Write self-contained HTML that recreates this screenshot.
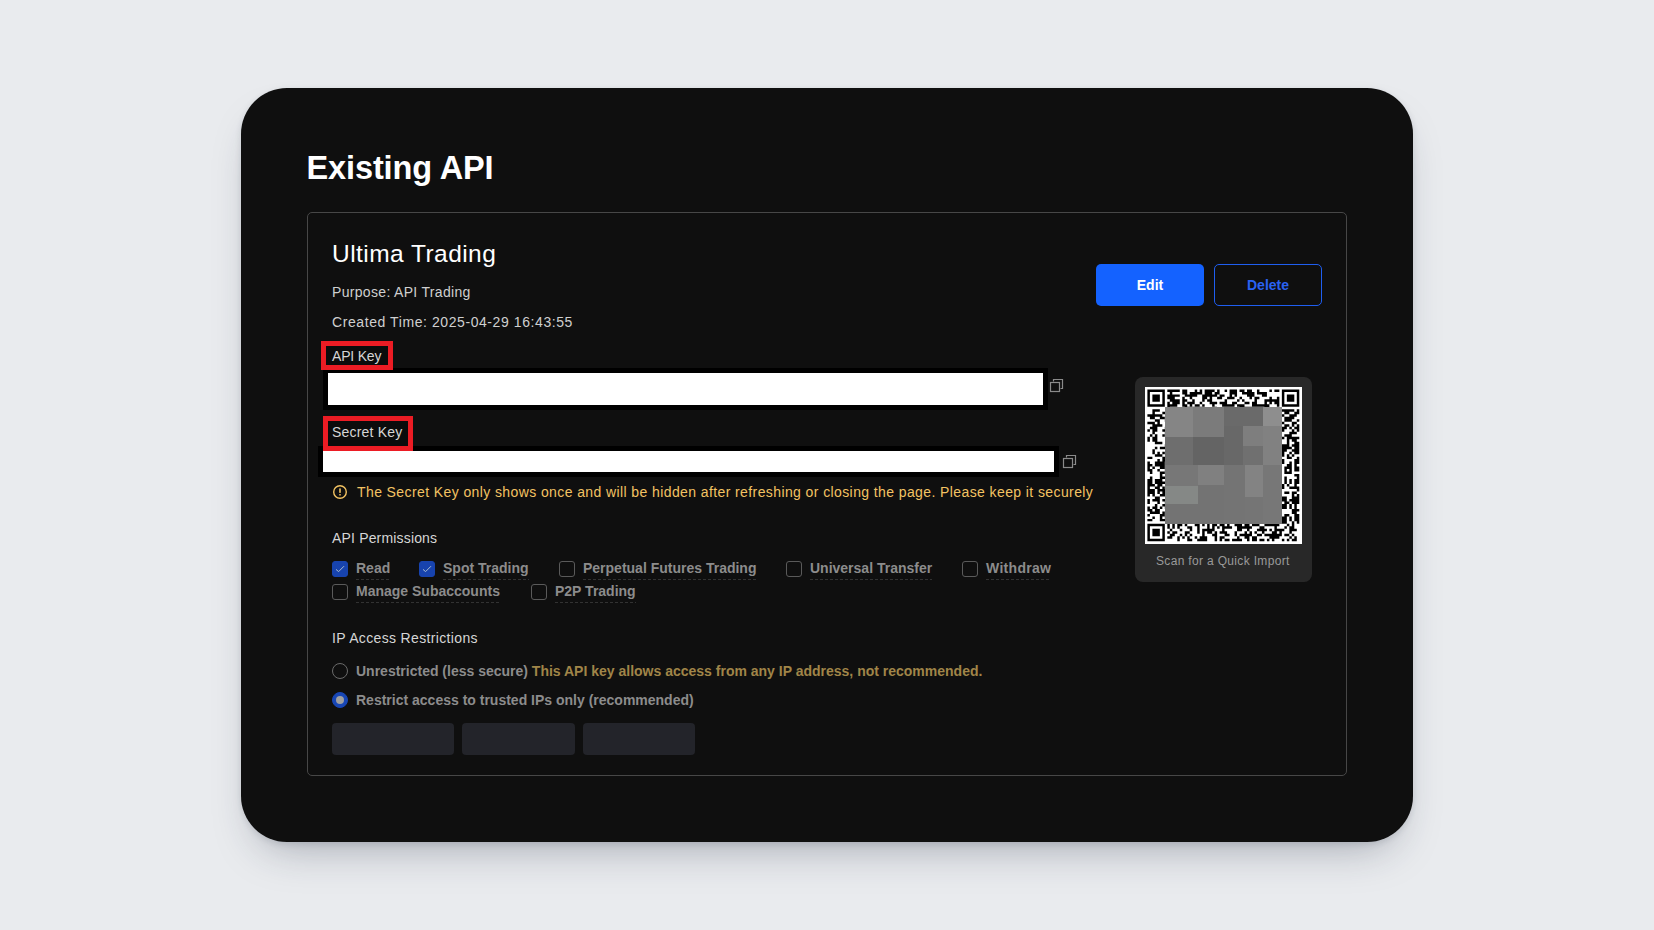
<!DOCTYPE html>
<html><head><meta charset="utf-8">
<style>
*{margin:0;padding:0;box-sizing:border-box}
html,body{width:1654px;height:930px;overflow:hidden;background:#e9ebee;font-family:"Liberation Sans",sans-serif}
.abs{position:absolute;white-space:nowrap}
#card{position:absolute;left:241px;top:88px;width:1172px;height:754px;background:#0f0f0f;border-radius:46px;box-shadow:0 22px 44px -18px rgba(30,40,60,0.36),0 2px 6px rgba(30,40,60,0.12)}
#box{position:absolute;left:307px;top:212px;width:1040px;height:564px;border:1px solid #474747;border-radius:5px}
.title{left:306.5px;top:150px;font-size:32.5px;letter-spacing:-0.12px;font-weight:bold;color:#fff;line-height:36px}
.name{left:332px;top:240px;font-size:24.5px;letter-spacing:0.45px;color:#fff;line-height:28px}
.meta{font-size:14px;color:#cfcfcf;line-height:16px}
.lbl{font-size:14px;color:#d6d6d6;line-height:16px}
.redbox{position:absolute;border:5px solid #ec1c24;background:#0c0c0c}
.keybar{position:absolute;background:#000}
.keywhite{position:absolute;background:#fff}
.btn{position:absolute;top:264px;height:42px;width:108px;border-radius:5px;font-size:14px;font-weight:bold;text-align:center;line-height:42px}
.cb{position:absolute;width:16px;height:16px;border:1px solid #5a5a5a;border-radius:3px}
.cb.on{background:#1743ae;border-color:#1743ae}
.perm{font-size:14px;font-weight:bold;color:#8c8c8c;line-height:16px;padding-bottom:4px;background-image:linear-gradient(90deg,#323232 55%,transparent 55%);background-size:5px 1px;background-repeat:repeat-x;background-position:0 100%}
.nb{background:none!important}
.radio{position:absolute;width:16px;height:16px;border:1px solid #6a6a6a;border-radius:50%}
.inp{position:absolute;top:723px;height:32px;background:#23242a;border-radius:4px}
svg{position:absolute}
</style></head><body>
<div id="card"></div>
<div class="abs title">Existing API</div>
<div id="box"></div>
<div class="abs name">Ultima Trading</div>
<div class="abs meta" style="left:332px;top:284px;letter-spacing:0.32px">Purpose: API Trading</div>
<div class="abs meta" style="left:332px;top:314px;letter-spacing:0.58px">Created Time: 2025-04-29 16:43:55</div>

<div class="btn" style="left:1096px;background:#1462ff;color:#fff">Edit</div>
<div class="btn" style="left:1214px;border:1px solid #1f5ef0;color:#2a62f2;line-height:40px">Delete</div>

<!-- API key -->
<div class="keybar" style="left:323px;top:368px;width:725px;height:42px"></div>
<div class="keywhite" style="left:328px;top:373px;width:715px;height:32px"></div>
<div class="redbox" style="left:321px;top:341px;width:72px;height:29px"></div>
<div class="abs lbl" style="left:332px;top:348px;letter-spacing:-0.2px">API Key</div>
<svg style="left:1049px;top:378px" width="16" height="16" viewBox="0 0 16 16"><path d="M4.5 3.5V1.5H13.5V10.5H11.5" fill="none" stroke="#8a8a8a" stroke-width="1.2"/><rect x="1.5" y="4.5" width="9" height="9" fill="none" stroke="#8a8a8a" stroke-width="1.2"/></svg>

<!-- Secret key -->
<div class="keybar" style="left:318px;top:446px;width:741px;height:31px"></div>
<div class="keywhite" style="left:323px;top:451px;width:731px;height:21px"></div>
<div class="redbox" style="left:323px;top:416px;width:90px;height:35px"></div>
<div class="abs lbl" style="left:332px;top:424px;letter-spacing:0.2px">Secret Key</div>
<svg style="left:1062px;top:454px" width="16" height="16" viewBox="0 0 16 16"><path d="M4.5 3.5V1.5H13.5V10.5H11.5" fill="none" stroke="#8a8a8a" stroke-width="1.2"/><rect x="1.5" y="4.5" width="9" height="9" fill="none" stroke="#8a8a8a" stroke-width="1.2"/></svg>

<svg style="left:332px;top:484px" width="16" height="16" viewBox="0 0 16 16"><circle cx="8" cy="8" r="6.3" fill="none" stroke="#f3c363" stroke-width="1.4"/><rect x="7.2" y="4.3" width="1.6" height="4.6" rx="0.6" fill="#f3c363"/><rect x="7.2" y="10" width="1.6" height="1.6" rx="0.5" fill="#f3c363"/></svg>
<div class="abs" style="left:357px;top:484px;font-size:14px;letter-spacing:0.4px;color:#f3c363;line-height:16px">The Secret Key only shows once and will be hidden after refreshing or closing the page. Please keep it securely</div>

<div class="abs lbl" style="left:332px;top:530px;letter-spacing:0.17px">API Permissions</div>
<div class="cb on" style="left:332px;top:561px"><svg style="left:-1px;top:-1px" width="16" height="16" viewBox="0 0 16 16"><path d="M4 8.4L6.6 10.6L12 5.2" fill="none" stroke="#a9bccf" stroke-width="1"/></svg></div>
<div class="abs perm" style="left:356px;top:560px">Read</div>
<div class="cb on" style="left:419px;top:561px"><svg style="left:-1px;top:-1px" width="16" height="16" viewBox="0 0 16 16"><path d="M4 8.4L6.6 10.6L12 5.2" fill="none" stroke="#a9bccf" stroke-width="1"/></svg></div>
<div class="abs perm" style="left:443px;top:560px">Spot Trading</div>
<div class="cb" style="left:559px;top:561px"></div>
<div class="abs perm" style="left:583px;top:560px">Perpetual Futures Trading</div>
<div class="cb" style="left:786px;top:561px"></div>
<div class="abs perm" style="left:810px;top:560px">Universal Transfer</div>
<div class="cb" style="left:962px;top:561px"></div>
<div class="abs perm" style="left:986px;top:560px;letter-spacing:0.3px">Withdraw</div>
<div class="cb" style="left:332px;top:584px"></div>
<div class="abs perm" style="left:356px;top:583px">Manage Subaccounts</div>
<div class="cb" style="left:531px;top:584px"></div>
<div class="abs perm" style="left:555px;top:583px">P2P Trading</div>

<div class="abs lbl" style="left:332px;top:630px;letter-spacing:0.35px">IP Access Restrictions</div>
<div class="radio" style="left:332px;top:663px"></div>
<div class="abs perm nb" style="left:356px;top:663px">Unrestricted (less secure) <span style="color:#a08548">This API key allows access from any IP address, not recommended.</span></div>
<div class="radio" style="left:332px;top:692px;background:#1846b4;border-color:#1846b4"><div style="position:absolute;left:3px;top:3px;width:8px;height:8px;border-radius:50%;background:#a0a0a0"></div></div>
<div class="abs perm nb" style="left:356px;top:692px">Restrict access to trusted IPs only (recommended)</div>
<div class="inp" style="left:332px;width:122px"></div>
<div class="inp" style="left:462px;width:113px"></div>
<div class="inp" style="left:583px;width:112px"></div>

<div style="position:absolute;left:1135px;top:377px;width:177px;height:205px;background:#282828;border-radius:8px"></div>
<svg style="left:1145px;top:387px" width="157" height="157" viewBox="0 0 157 157"><rect width="157" height="157" fill="#fff"/><path transform="translate(2.4 2.4)" fill="#000" d="M0.00 0.00h17.43v2.49h-17.43zM19.92 0.00h12.45v2.49h-12.45zM34.86 0.00h4.98v2.49h-4.98zM47.31 0.00h2.49v2.49h-2.49zM52.29 0.00h2.49v2.49h-2.49zM57.27 0.00h9.96v2.49h-9.96zM69.72 0.00h2.49v2.49h-2.49zM77.19 0.00h2.49v2.49h-2.49zM82.17 0.00h7.47v2.49h-7.47zM92.13 0.00h4.98v2.49h-4.98zM99.60 0.00h4.98v2.49h-4.98zM109.56 0.00h2.49v2.49h-2.49zM122.01 0.00h2.49v2.49h-2.49zM126.99 0.00h4.98v2.49h-4.98zM134.46 0.00h17.43v2.49h-17.43zM0.00 2.49h2.49v2.49h-2.49zM14.94 2.49h2.49v2.49h-2.49zM22.41 2.49h2.49v2.49h-2.49zM34.86 2.49h4.98v2.49h-4.98zM42.33 2.49h12.45v2.49h-12.45zM57.27 2.49h7.47v2.49h-7.47zM67.23 2.49h4.98v2.49h-4.98zM82.17 2.49h7.47v2.49h-7.47zM94.62 2.49h12.45v2.49h-12.45zM109.56 2.49h9.96v2.49h-9.96zM134.46 2.49h2.49v2.49h-2.49zM149.40 2.49h2.49v2.49h-2.49zM0.00 4.98h2.49v2.49h-2.49zM4.98 4.98h7.47v2.49h-7.47zM14.94 4.98h2.49v2.49h-2.49zM19.92 4.98h12.45v2.49h-12.45zM37.35 4.98h12.45v2.49h-12.45zM54.78 4.98h14.94v2.49h-14.94zM72.21 4.98h4.98v2.49h-4.98zM82.17 4.98h2.49v2.49h-2.49zM87.15 4.98h2.49v2.49h-2.49zM99.60 4.98h7.47v2.49h-7.47zM114.54 4.98h4.98v2.49h-4.98zM134.46 4.98h2.49v2.49h-2.49zM139.44 4.98h7.47v2.49h-7.47zM149.40 4.98h2.49v2.49h-2.49zM0.00 7.47h2.49v2.49h-2.49zM4.98 7.47h7.47v2.49h-7.47zM14.94 7.47h2.49v2.49h-2.49zM19.92 7.47h7.47v2.49h-7.47zM34.86 7.47h2.49v2.49h-2.49zM42.33 7.47h2.49v2.49h-2.49zM54.78 7.47h4.98v2.49h-4.98zM62.25 7.47h2.49v2.49h-2.49zM69.72 7.47h4.98v2.49h-4.98zM79.68 7.47h7.47v2.49h-7.47zM92.13 7.47h2.49v2.49h-2.49zM102.09 7.47h2.49v2.49h-2.49zM107.07 7.47h4.98v2.49h-4.98zM122.01 7.47h2.49v2.49h-2.49zM129.48 7.47h2.49v2.49h-2.49zM134.46 7.47h2.49v2.49h-2.49zM139.44 7.47h7.47v2.49h-7.47zM149.40 7.47h2.49v2.49h-2.49zM0.00 9.96h2.49v2.49h-2.49zM4.98 9.96h7.47v2.49h-7.47zM14.94 9.96h2.49v2.49h-2.49zM22.41 9.96h9.96v2.49h-9.96zM34.86 9.96h4.98v2.49h-4.98zM44.82 9.96h2.49v2.49h-2.49zM54.78 9.96h2.49v2.49h-2.49zM59.76 9.96h4.98v2.49h-4.98zM77.19 9.96h2.49v2.49h-2.49zM89.64 9.96h2.49v2.49h-2.49zM94.62 9.96h2.49v2.49h-2.49zM107.07 9.96h2.49v2.49h-2.49zM117.03 9.96h14.94v2.49h-14.94zM134.46 9.96h2.49v2.49h-2.49zM139.44 9.96h7.47v2.49h-7.47zM149.40 9.96h2.49v2.49h-2.49zM0.00 12.45h2.49v2.49h-2.49zM14.94 12.45h2.49v2.49h-2.49zM19.92 12.45h2.49v2.49h-2.49zM24.90 12.45h7.47v2.49h-7.47zM34.86 12.45h2.49v2.49h-2.49zM39.84 12.45h7.47v2.49h-7.47zM52.29 12.45h2.49v2.49h-2.49zM62.25 12.45h7.47v2.49h-7.47zM72.21 12.45h7.47v2.49h-7.47zM84.66 12.45h4.98v2.49h-4.98zM97.11 12.45h4.98v2.49h-4.98zM104.58 12.45h4.98v2.49h-4.98zM117.03 12.45h2.49v2.49h-2.49zM122.01 12.45h2.49v2.49h-2.49zM126.99 12.45h4.98v2.49h-4.98zM134.46 12.45h2.49v2.49h-2.49zM149.40 12.45h2.49v2.49h-2.49zM0.00 14.94h17.43v2.49h-17.43zM19.92 14.94h9.96v2.49h-9.96zM34.86 14.94h4.98v2.49h-4.98zM42.33 14.94h2.49v2.49h-2.49zM47.31 14.94h4.98v2.49h-4.98zM54.78 14.94h2.49v2.49h-2.49zM64.74 14.94h2.49v2.49h-2.49zM74.70 14.94h12.45v2.49h-12.45zM89.64 14.94h7.47v2.49h-7.47zM104.58 14.94h17.43v2.49h-17.43zM129.48 14.94h2.49v2.49h-2.49zM134.46 14.94h17.43v2.49h-17.43zM19.92 17.43h2.49v2.49h-2.49zM37.35 17.43h4.98v2.49h-4.98zM44.82 17.43h2.49v2.49h-2.49zM52.29 17.43h2.49v2.49h-2.49zM67.23 17.43h2.49v2.49h-2.49zM92.13 17.43h12.45v2.49h-12.45zM117.03 17.43h4.98v2.49h-4.98zM4.98 19.92h7.47v2.49h-7.47zM22.41 19.92h7.47v2.49h-7.47zM32.37 19.92h2.49v2.49h-2.49zM37.35 19.92h7.47v2.49h-7.47zM52.29 19.92h2.49v2.49h-2.49zM57.27 19.92h7.47v2.49h-7.47zM67.23 19.92h2.49v2.49h-2.49zM74.70 19.92h4.98v2.49h-4.98zM84.66 19.92h7.47v2.49h-7.47zM94.62 19.92h2.49v2.49h-2.49zM99.60 19.92h2.49v2.49h-2.49zM107.07 19.92h2.49v2.49h-2.49zM119.52 19.92h2.49v2.49h-2.49zM124.50 19.92h22.41v2.49h-22.41zM149.40 19.92h2.49v2.49h-2.49zM4.98 22.41h2.49v2.49h-2.49zM14.94 22.41h7.47v2.49h-7.47zM27.39 22.41h12.45v2.49h-12.45zM42.33 22.41h2.49v2.49h-2.49zM47.31 22.41h4.98v2.49h-4.98zM54.78 22.41h4.98v2.49h-4.98zM79.68 22.41h2.49v2.49h-2.49zM84.66 22.41h2.49v2.49h-2.49zM92.13 22.41h4.98v2.49h-4.98zM99.60 22.41h9.96v2.49h-9.96zM114.54 22.41h2.49v2.49h-2.49zM119.52 22.41h2.49v2.49h-2.49zM124.50 22.41h9.96v2.49h-9.96zM136.95 22.41h4.98v2.49h-4.98zM146.91 22.41h4.98v2.49h-4.98zM0.00 24.90h14.94v2.49h-14.94zM22.41 24.90h4.98v2.49h-4.98zM29.88 24.90h9.96v2.49h-9.96zM42.33 24.90h2.49v2.49h-2.49zM52.29 24.90h12.45v2.49h-12.45zM72.21 24.90h4.98v2.49h-4.98zM82.17 24.90h2.49v2.49h-2.49zM87.15 24.90h4.98v2.49h-4.98zM102.09 24.90h7.47v2.49h-7.47zM124.50 24.90h2.49v2.49h-2.49zM129.48 24.90h2.49v2.49h-2.49zM134.46 24.90h2.49v2.49h-2.49zM141.93 24.90h7.47v2.49h-7.47zM2.49 27.39h4.98v2.49h-4.98zM12.45 27.39h4.98v2.49h-4.98zM19.92 27.39h7.47v2.49h-7.47zM34.86 27.39h7.47v2.49h-7.47zM47.31 27.39h7.47v2.49h-7.47zM57.27 27.39h4.98v2.49h-4.98zM67.23 27.39h9.96v2.49h-9.96zM79.68 27.39h2.49v2.49h-2.49zM89.64 27.39h2.49v2.49h-2.49zM94.62 27.39h2.49v2.49h-2.49zM99.60 27.39h4.98v2.49h-4.98zM107.07 27.39h2.49v2.49h-2.49zM112.05 27.39h9.96v2.49h-9.96zM126.99 27.39h7.47v2.49h-7.47zM136.95 27.39h9.96v2.49h-9.96zM7.47 29.88h4.98v2.49h-4.98zM17.43 29.88h2.49v2.49h-2.49zM22.41 29.88h17.43v2.49h-17.43zM42.33 29.88h2.49v2.49h-2.49zM47.31 29.88h4.98v2.49h-4.98zM57.27 29.88h9.96v2.49h-9.96zM69.72 29.88h4.98v2.49h-4.98zM77.19 29.88h4.98v2.49h-4.98zM87.15 29.88h7.47v2.49h-7.47zM97.11 29.88h2.49v2.49h-2.49zM104.58 29.88h4.98v2.49h-4.98zM114.54 29.88h2.49v2.49h-2.49zM119.52 29.88h7.47v2.49h-7.47zM136.95 29.88h7.47v2.49h-7.47zM149.40 29.88h2.49v2.49h-2.49zM0.00 32.37h7.47v2.49h-7.47zM9.96 32.37h2.49v2.49h-2.49zM24.90 32.37h7.47v2.49h-7.47zM34.86 32.37h4.98v2.49h-4.98zM42.33 32.37h7.47v2.49h-7.47zM52.29 32.37h2.49v2.49h-2.49zM62.25 32.37h9.96v2.49h-9.96zM74.70 32.37h7.47v2.49h-7.47zM94.62 32.37h2.49v2.49h-2.49zM99.60 32.37h2.49v2.49h-2.49zM104.58 32.37h2.49v2.49h-2.49zM109.56 32.37h9.96v2.49h-9.96zM124.50 32.37h4.98v2.49h-4.98zM134.46 32.37h2.49v2.49h-2.49zM144.42 32.37h4.98v2.49h-4.98zM4.98 34.86h9.96v2.49h-9.96zM22.41 34.86h2.49v2.49h-2.49zM27.39 34.86h4.98v2.49h-4.98zM37.35 34.86h2.49v2.49h-2.49zM44.82 34.86h12.45v2.49h-12.45zM62.25 34.86h7.47v2.49h-7.47zM72.21 34.86h7.47v2.49h-7.47zM84.66 34.86h7.47v2.49h-7.47zM97.11 34.86h4.98v2.49h-4.98zM104.58 34.86h7.47v2.49h-7.47zM114.54 34.86h2.49v2.49h-2.49zM119.52 34.86h4.98v2.49h-4.98zM129.48 34.86h4.98v2.49h-4.98zM136.95 34.86h4.98v2.49h-4.98zM144.42 34.86h2.49v2.49h-2.49zM149.40 34.86h2.49v2.49h-2.49zM2.49 37.35h7.47v2.49h-7.47zM17.43 37.35h2.49v2.49h-2.49zM22.41 37.35h2.49v2.49h-2.49zM27.39 37.35h4.98v2.49h-4.98zM37.35 37.35h4.98v2.49h-4.98zM47.31 37.35h4.98v2.49h-4.98zM57.27 37.35h4.98v2.49h-4.98zM64.74 37.35h2.49v2.49h-2.49zM74.70 37.35h2.49v2.49h-2.49zM79.68 37.35h4.98v2.49h-4.98zM89.64 37.35h7.47v2.49h-7.47zM99.60 37.35h7.47v2.49h-7.47zM112.05 37.35h2.49v2.49h-2.49zM119.52 37.35h2.49v2.49h-2.49zM124.50 37.35h2.49v2.49h-2.49zM134.46 37.35h4.98v2.49h-4.98zM141.93 37.35h2.49v2.49h-2.49zM146.91 37.35h4.98v2.49h-4.98zM0.00 39.84h2.49v2.49h-2.49zM4.98 39.84h4.98v2.49h-4.98zM14.94 39.84h19.92v2.49h-19.92zM37.35 39.84h2.49v2.49h-2.49zM42.33 39.84h2.49v2.49h-2.49zM52.29 39.84h2.49v2.49h-2.49zM57.27 39.84h2.49v2.49h-2.49zM62.25 39.84h2.49v2.49h-2.49zM74.70 39.84h2.49v2.49h-2.49zM79.68 39.84h2.49v2.49h-2.49zM87.15 39.84h2.49v2.49h-2.49zM94.62 39.84h4.98v2.49h-4.98zM102.09 39.84h2.49v2.49h-2.49zM107.07 39.84h2.49v2.49h-2.49zM112.05 39.84h2.49v2.49h-2.49zM119.52 39.84h4.98v2.49h-4.98zM126.99 39.84h9.96v2.49h-9.96zM144.42 39.84h2.49v2.49h-2.49zM149.40 39.84h2.49v2.49h-2.49zM4.98 42.33h2.49v2.49h-2.49zM17.43 42.33h2.49v2.49h-2.49zM24.90 42.33h2.49v2.49h-2.49zM29.88 42.33h2.49v2.49h-2.49zM37.35 42.33h2.49v2.49h-2.49zM42.33 42.33h4.98v2.49h-4.98zM49.80 42.33h2.49v2.49h-2.49zM54.78 42.33h2.49v2.49h-2.49zM67.23 42.33h9.96v2.49h-9.96zM79.68 42.33h2.49v2.49h-2.49zM87.15 42.33h4.98v2.49h-4.98zM94.62 42.33h14.94v2.49h-14.94zM114.54 42.33h2.49v2.49h-2.49zM119.52 42.33h4.98v2.49h-4.98zM126.99 42.33h7.47v2.49h-7.47zM141.93 42.33h7.47v2.49h-7.47zM2.49 44.82h2.49v2.49h-2.49zM7.47 44.82h2.49v2.49h-2.49zM14.94 44.82h2.49v2.49h-2.49zM19.92 44.82h2.49v2.49h-2.49zM24.90 44.82h7.47v2.49h-7.47zM34.86 44.82h2.49v2.49h-2.49zM42.33 44.82h4.98v2.49h-4.98zM57.27 44.82h9.96v2.49h-9.96zM74.70 44.82h2.49v2.49h-2.49zM82.17 44.82h2.49v2.49h-2.49zM87.15 44.82h14.94v2.49h-14.94zM112.05 44.82h2.49v2.49h-2.49zM117.03 44.82h2.49v2.49h-2.49zM124.50 44.82h2.49v2.49h-2.49zM131.97 44.82h2.49v2.49h-2.49zM136.95 44.82h7.47v2.49h-7.47zM0.00 47.31h2.49v2.49h-2.49zM4.98 47.31h4.98v2.49h-4.98zM22.41 47.31h2.49v2.49h-2.49zM32.37 47.31h2.49v2.49h-2.49zM39.84 47.31h4.98v2.49h-4.98zM47.31 47.31h2.49v2.49h-2.49zM52.29 47.31h7.47v2.49h-7.47zM62.25 47.31h9.96v2.49h-9.96zM82.17 47.31h2.49v2.49h-2.49zM87.15 47.31h2.49v2.49h-2.49zM97.11 47.31h2.49v2.49h-2.49zM107.07 47.31h9.96v2.49h-9.96zM129.48 47.31h7.47v2.49h-7.47zM139.44 47.31h12.45v2.49h-12.45zM0.00 49.80h2.49v2.49h-2.49zM4.98 49.80h4.98v2.49h-4.98zM19.92 49.80h7.47v2.49h-7.47zM29.88 49.80h2.49v2.49h-2.49zM37.35 49.80h2.49v2.49h-2.49zM42.33 49.80h2.49v2.49h-2.49zM47.31 49.80h7.47v2.49h-7.47zM59.76 49.80h7.47v2.49h-7.47zM69.72 49.80h7.47v2.49h-7.47zM79.68 49.80h2.49v2.49h-2.49zM84.66 49.80h4.98v2.49h-4.98zM92.13 49.80h4.98v2.49h-4.98zM99.60 49.80h2.49v2.49h-2.49zM112.05 49.80h7.47v2.49h-7.47zM122.01 49.80h2.49v2.49h-2.49zM126.99 49.80h7.47v2.49h-7.47zM139.44 49.80h2.49v2.49h-2.49zM144.42 49.80h4.98v2.49h-4.98zM7.47 52.29h7.47v2.49h-7.47zM22.41 52.29h4.98v2.49h-4.98zM32.37 52.29h4.98v2.49h-4.98zM39.84 52.29h7.47v2.49h-7.47zM52.29 52.29h9.96v2.49h-9.96zM64.74 52.29h7.47v2.49h-7.47zM77.19 52.29h2.49v2.49h-2.49zM82.17 52.29h4.98v2.49h-4.98zM94.62 52.29h4.98v2.49h-4.98zM102.09 52.29h12.45v2.49h-12.45zM124.50 52.29h4.98v2.49h-4.98zM131.97 52.29h2.49v2.49h-2.49zM139.44 52.29h2.49v2.49h-2.49zM146.91 52.29h4.98v2.49h-4.98zM17.43 54.78h4.98v2.49h-4.98zM24.90 54.78h4.98v2.49h-4.98zM37.35 54.78h7.47v2.49h-7.47zM47.31 54.78h2.49v2.49h-2.49zM54.78 54.78h2.49v2.49h-2.49zM62.25 54.78h4.98v2.49h-4.98zM69.72 54.78h2.49v2.49h-2.49zM74.70 54.78h2.49v2.49h-2.49zM84.66 54.78h2.49v2.49h-2.49zM104.58 54.78h2.49v2.49h-2.49zM109.56 54.78h2.49v2.49h-2.49zM114.54 54.78h2.49v2.49h-2.49zM119.52 54.78h2.49v2.49h-2.49zM124.50 54.78h17.43v2.49h-17.43zM144.42 54.78h7.47v2.49h-7.47zM7.47 57.27h2.49v2.49h-2.49zM12.45 57.27h7.47v2.49h-7.47zM27.39 57.27h2.49v2.49h-2.49zM32.37 57.27h2.49v2.49h-2.49zM37.35 57.27h2.49v2.49h-2.49zM47.31 57.27h4.98v2.49h-4.98zM54.78 57.27h2.49v2.49h-2.49zM59.76 57.27h2.49v2.49h-2.49zM64.74 57.27h14.94v2.49h-14.94zM82.17 57.27h12.45v2.49h-12.45zM99.60 57.27h2.49v2.49h-2.49zM107.07 57.27h2.49v2.49h-2.49zM117.03 57.27h2.49v2.49h-2.49zM124.50 57.27h4.98v2.49h-4.98zM134.46 57.27h9.96v2.49h-9.96zM146.91 57.27h4.98v2.49h-4.98zM4.98 59.76h2.49v2.49h-2.49zM24.90 59.76h2.49v2.49h-2.49zM34.86 59.76h2.49v2.49h-2.49zM42.33 59.76h22.41v2.49h-22.41zM69.72 59.76h2.49v2.49h-2.49zM74.70 59.76h2.49v2.49h-2.49zM84.66 59.76h4.98v2.49h-4.98zM92.13 59.76h2.49v2.49h-2.49zM99.60 59.76h2.49v2.49h-2.49zM109.56 59.76h2.49v2.49h-2.49zM117.03 59.76h2.49v2.49h-2.49zM122.01 59.76h2.49v2.49h-2.49zM129.48 59.76h2.49v2.49h-2.49zM134.46 59.76h4.98v2.49h-4.98zM144.42 59.76h7.47v2.49h-7.47zM4.98 62.25h2.49v2.49h-2.49zM9.96 62.25h2.49v2.49h-2.49zM14.94 62.25h2.49v2.49h-2.49zM27.39 62.25h7.47v2.49h-7.47zM42.33 62.25h2.49v2.49h-2.49zM52.29 62.25h9.96v2.49h-9.96zM89.64 62.25h2.49v2.49h-2.49zM94.62 62.25h2.49v2.49h-2.49zM99.60 62.25h7.47v2.49h-7.47zM114.54 62.25h2.49v2.49h-2.49zM124.50 62.25h12.45v2.49h-12.45zM141.93 62.25h2.49v2.49h-2.49zM146.91 62.25h4.98v2.49h-4.98zM7.47 64.74h7.47v2.49h-7.47zM22.41 64.74h7.47v2.49h-7.47zM32.37 64.74h9.96v2.49h-9.96zM44.82 64.74h2.49v2.49h-2.49zM49.80 64.74h2.49v2.49h-2.49zM54.78 64.74h4.98v2.49h-4.98zM62.25 64.74h2.49v2.49h-2.49zM67.23 64.74h4.98v2.49h-4.98zM82.17 64.74h2.49v2.49h-2.49zM89.64 64.74h2.49v2.49h-2.49zM94.62 64.74h2.49v2.49h-2.49zM102.09 64.74h4.98v2.49h-4.98zM112.05 64.74h4.98v2.49h-4.98zM119.52 64.74h2.49v2.49h-2.49zM124.50 64.74h7.47v2.49h-7.47zM134.46 64.74h2.49v2.49h-2.49zM139.44 64.74h2.49v2.49h-2.49zM144.42 64.74h2.49v2.49h-2.49zM0.00 67.23h4.98v2.49h-4.98zM14.94 67.23h4.98v2.49h-4.98zM27.39 67.23h2.49v2.49h-2.49zM39.84 67.23h4.98v2.49h-4.98zM47.31 67.23h2.49v2.49h-2.49zM59.76 67.23h9.96v2.49h-9.96zM77.19 67.23h2.49v2.49h-2.49zM89.64 67.23h2.49v2.49h-2.49zM102.09 67.23h4.98v2.49h-4.98zM112.05 67.23h2.49v2.49h-2.49zM119.52 67.23h2.49v2.49h-2.49zM126.99 67.23h7.47v2.49h-7.47zM139.44 67.23h4.98v2.49h-4.98zM149.40 67.23h2.49v2.49h-2.49zM9.96 69.72h2.49v2.49h-2.49zM14.94 69.72h7.47v2.49h-7.47zM24.90 69.72h2.49v2.49h-2.49zM29.88 69.72h2.49v2.49h-2.49zM34.86 69.72h4.98v2.49h-4.98zM42.33 69.72h4.98v2.49h-4.98zM52.29 69.72h2.49v2.49h-2.49zM57.27 69.72h2.49v2.49h-2.49zM62.25 69.72h4.98v2.49h-4.98zM72.21 69.72h2.49v2.49h-2.49zM77.19 69.72h2.49v2.49h-2.49zM82.17 69.72h2.49v2.49h-2.49zM94.62 69.72h14.94v2.49h-14.94zM114.54 69.72h2.49v2.49h-2.49zM122.01 69.72h2.49v2.49h-2.49zM126.99 69.72h4.98v2.49h-4.98zM134.46 69.72h2.49v2.49h-2.49zM146.91 69.72h4.98v2.49h-4.98zM0.00 72.21h2.49v2.49h-2.49zM7.47 72.21h9.96v2.49h-9.96zM24.90 72.21h2.49v2.49h-2.49zM37.35 72.21h4.98v2.49h-4.98zM49.80 72.21h2.49v2.49h-2.49zM57.27 72.21h19.92v2.49h-19.92zM79.68 72.21h2.49v2.49h-2.49zM84.66 72.21h4.98v2.49h-4.98zM92.13 72.21h2.49v2.49h-2.49zM102.09 72.21h7.47v2.49h-7.47zM117.03 72.21h4.98v2.49h-4.98zM124.50 72.21h2.49v2.49h-2.49zM129.48 72.21h7.47v2.49h-7.47zM141.93 72.21h2.49v2.49h-2.49zM146.91 72.21h4.98v2.49h-4.98zM0.00 74.70h4.98v2.49h-4.98zM7.47 74.70h9.96v2.49h-9.96zM19.92 74.70h2.49v2.49h-2.49zM24.90 74.70h2.49v2.49h-2.49zM32.37 74.70h14.94v2.49h-14.94zM54.78 74.70h4.98v2.49h-4.98zM62.25 74.70h2.49v2.49h-2.49zM67.23 74.70h2.49v2.49h-2.49zM72.21 74.70h2.49v2.49h-2.49zM77.19 74.70h7.47v2.49h-7.47zM89.64 74.70h4.98v2.49h-4.98zM97.11 74.70h2.49v2.49h-2.49zM102.09 74.70h4.98v2.49h-4.98zM112.05 74.70h7.47v2.49h-7.47zM122.01 74.70h7.47v2.49h-7.47zM139.44 74.70h4.98v2.49h-4.98zM146.91 74.70h2.49v2.49h-2.49zM0.00 77.19h2.49v2.49h-2.49zM4.98 77.19h2.49v2.49h-2.49zM12.45 77.19h4.98v2.49h-4.98zM19.92 77.19h2.49v2.49h-2.49zM24.90 77.19h4.98v2.49h-4.98zM32.37 77.19h7.47v2.49h-7.47zM42.33 77.19h2.49v2.49h-2.49zM47.31 77.19h2.49v2.49h-2.49zM52.29 77.19h2.49v2.49h-2.49zM62.25 77.19h2.49v2.49h-2.49zM67.23 77.19h2.49v2.49h-2.49zM72.21 77.19h2.49v2.49h-2.49zM79.68 77.19h2.49v2.49h-2.49zM89.64 77.19h2.49v2.49h-2.49zM94.62 77.19h9.96v2.49h-9.96zM107.07 77.19h4.98v2.49h-4.98zM114.54 77.19h4.98v2.49h-4.98zM129.48 77.19h2.49v2.49h-2.49zM136.95 77.19h7.47v2.49h-7.47zM146.91 77.19h4.98v2.49h-4.98zM0.00 79.68h4.98v2.49h-4.98zM9.96 79.68h2.49v2.49h-2.49zM17.43 79.68h2.49v2.49h-2.49zM24.90 79.68h4.98v2.49h-4.98zM34.86 79.68h2.49v2.49h-2.49zM42.33 79.68h9.96v2.49h-9.96zM64.74 79.68h2.49v2.49h-2.49zM74.70 79.68h4.98v2.49h-4.98zM82.17 79.68h2.49v2.49h-2.49zM87.15 79.68h4.98v2.49h-4.98zM94.62 79.68h4.98v2.49h-4.98zM117.03 79.68h2.49v2.49h-2.49zM122.01 79.68h2.49v2.49h-2.49zM126.99 79.68h2.49v2.49h-2.49zM136.95 79.68h2.49v2.49h-2.49zM141.93 79.68h2.49v2.49h-2.49zM146.91 79.68h4.98v2.49h-4.98zM2.49 82.17h2.49v2.49h-2.49zM12.45 82.17h4.98v2.49h-4.98zM19.92 82.17h19.92v2.49h-19.92zM52.29 82.17h2.49v2.49h-2.49zM57.27 82.17h2.49v2.49h-2.49zM64.74 82.17h9.96v2.49h-9.96zM77.19 82.17h2.49v2.49h-2.49zM82.17 82.17h4.98v2.49h-4.98zM89.64 82.17h2.49v2.49h-2.49zM94.62 82.17h4.98v2.49h-4.98zM102.09 82.17h2.49v2.49h-2.49zM107.07 82.17h4.98v2.49h-4.98zM114.54 82.17h9.96v2.49h-9.96zM126.99 82.17h4.98v2.49h-4.98zM136.95 82.17h7.47v2.49h-7.47zM12.45 84.66h2.49v2.49h-2.49zM22.41 84.66h2.49v2.49h-2.49zM27.39 84.66h2.49v2.49h-2.49zM34.86 84.66h2.49v2.49h-2.49zM42.33 84.66h2.49v2.49h-2.49zM52.29 84.66h7.47v2.49h-7.47zM62.25 84.66h4.98v2.49h-4.98zM69.72 84.66h4.98v2.49h-4.98zM79.68 84.66h12.45v2.49h-12.45zM97.11 84.66h2.49v2.49h-2.49zM102.09 84.66h2.49v2.49h-2.49zM112.05 84.66h4.98v2.49h-4.98zM119.52 84.66h4.98v2.49h-4.98zM126.99 84.66h2.49v2.49h-2.49zM146.91 84.66h4.98v2.49h-4.98zM2.49 87.15h2.49v2.49h-2.49zM12.45 87.15h7.47v2.49h-7.47zM29.88 87.15h4.98v2.49h-4.98zM39.84 87.15h2.49v2.49h-2.49zM47.31 87.15h4.98v2.49h-4.98zM59.76 87.15h2.49v2.49h-2.49zM74.70 87.15h7.47v2.49h-7.47zM87.15 87.15h4.98v2.49h-4.98zM97.11 87.15h2.49v2.49h-2.49zM104.58 87.15h4.98v2.49h-4.98zM112.05 87.15h2.49v2.49h-2.49zM117.03 87.15h4.98v2.49h-4.98zM129.48 87.15h4.98v2.49h-4.98zM136.95 87.15h2.49v2.49h-2.49zM149.40 87.15h2.49v2.49h-2.49zM0.00 89.64h4.98v2.49h-4.98zM7.47 89.64h7.47v2.49h-7.47zM24.90 89.64h4.98v2.49h-4.98zM32.37 89.64h2.49v2.49h-2.49zM37.35 89.64h9.96v2.49h-9.96zM52.29 89.64h9.96v2.49h-9.96zM69.72 89.64h2.49v2.49h-2.49zM74.70 89.64h4.98v2.49h-4.98zM84.66 89.64h2.49v2.49h-2.49zM92.13 89.64h2.49v2.49h-2.49zM99.60 89.64h2.49v2.49h-2.49zM104.58 89.64h4.98v2.49h-4.98zM112.05 89.64h4.98v2.49h-4.98zM119.52 89.64h2.49v2.49h-2.49zM124.50 89.64h9.96v2.49h-9.96zM136.95 89.64h2.49v2.49h-2.49zM141.93 89.64h2.49v2.49h-2.49zM146.91 89.64h4.98v2.49h-4.98zM0.00 92.13h4.98v2.49h-4.98zM7.47 92.13h14.94v2.49h-14.94zM24.90 92.13h4.98v2.49h-4.98zM32.37 92.13h4.98v2.49h-4.98zM39.84 92.13h4.98v2.49h-4.98zM49.80 92.13h4.98v2.49h-4.98zM57.27 92.13h2.49v2.49h-2.49zM62.25 92.13h2.49v2.49h-2.49zM69.72 92.13h7.47v2.49h-7.47zM79.68 92.13h2.49v2.49h-2.49zM87.15 92.13h4.98v2.49h-4.98zM94.62 92.13h2.49v2.49h-2.49zM99.60 92.13h2.49v2.49h-2.49zM107.07 92.13h2.49v2.49h-2.49zM112.05 92.13h2.49v2.49h-2.49zM119.52 92.13h9.96v2.49h-9.96zM131.97 92.13h2.49v2.49h-2.49zM136.95 92.13h2.49v2.49h-2.49zM141.93 92.13h2.49v2.49h-2.49zM146.91 92.13h4.98v2.49h-4.98zM0.00 94.62h7.47v2.49h-7.47zM9.96 94.62h4.98v2.49h-4.98zM24.90 94.62h7.47v2.49h-7.47zM37.35 94.62h4.98v2.49h-4.98zM47.31 94.62h2.49v2.49h-2.49zM52.29 94.62h2.49v2.49h-2.49zM57.27 94.62h4.98v2.49h-4.98zM69.72 94.62h19.92v2.49h-19.92zM92.13 94.62h2.49v2.49h-2.49zM102.09 94.62h4.98v2.49h-4.98zM109.56 94.62h4.98v2.49h-4.98zM119.52 94.62h4.98v2.49h-4.98zM129.48 94.62h7.47v2.49h-7.47zM139.44 94.62h2.49v2.49h-2.49zM146.91 94.62h2.49v2.49h-2.49zM0.00 97.11h2.49v2.49h-2.49zM7.47 97.11h4.98v2.49h-4.98zM14.94 97.11h2.49v2.49h-2.49zM29.88 97.11h4.98v2.49h-4.98zM37.35 97.11h2.49v2.49h-2.49zM44.82 97.11h2.49v2.49h-2.49zM49.80 97.11h2.49v2.49h-2.49zM57.27 97.11h2.49v2.49h-2.49zM69.72 97.11h17.43v2.49h-17.43zM92.13 97.11h4.98v2.49h-4.98zM99.60 97.11h2.49v2.49h-2.49zM104.58 97.11h4.98v2.49h-4.98zM112.05 97.11h2.49v2.49h-2.49zM117.03 97.11h2.49v2.49h-2.49zM126.99 97.11h2.49v2.49h-2.49zM134.46 97.11h2.49v2.49h-2.49zM141.93 97.11h9.96v2.49h-9.96zM0.00 99.60h7.47v2.49h-7.47zM9.96 99.60h19.92v2.49h-19.92zM34.86 99.60h2.49v2.49h-2.49zM44.82 99.60h9.96v2.49h-9.96zM57.27 99.60h2.49v2.49h-2.49zM72.21 99.60h9.96v2.49h-9.96zM87.15 99.60h4.98v2.49h-4.98zM99.60 99.60h2.49v2.49h-2.49zM109.56 99.60h4.98v2.49h-4.98zM117.03 99.60h4.98v2.49h-4.98zM124.50 99.60h2.49v2.49h-2.49zM129.48 99.60h4.98v2.49h-4.98zM149.40 99.60h2.49v2.49h-2.49zM0.00 102.09h7.47v2.49h-7.47zM9.96 102.09h2.49v2.49h-2.49zM14.94 102.09h4.98v2.49h-4.98zM22.41 102.09h9.96v2.49h-9.96zM34.86 102.09h2.49v2.49h-2.49zM44.82 102.09h4.98v2.49h-4.98zM54.78 102.09h7.47v2.49h-7.47zM69.72 102.09h7.47v2.49h-7.47zM79.68 102.09h12.45v2.49h-12.45zM109.56 102.09h2.49v2.49h-2.49zM117.03 102.09h2.49v2.49h-2.49zM124.50 102.09h2.49v2.49h-2.49zM129.48 102.09h4.98v2.49h-4.98zM136.95 102.09h4.98v2.49h-4.98zM144.42 102.09h4.98v2.49h-4.98zM0.00 104.58h2.49v2.49h-2.49zM4.98 104.58h2.49v2.49h-2.49zM12.45 104.58h7.47v2.49h-7.47zM24.90 104.58h2.49v2.49h-2.49zM29.88 104.58h4.98v2.49h-4.98zM37.35 104.58h4.98v2.49h-4.98zM44.82 104.58h2.49v2.49h-2.49zM49.80 104.58h2.49v2.49h-2.49zM57.27 104.58h9.96v2.49h-9.96zM77.19 104.58h2.49v2.49h-2.49zM84.66 104.58h2.49v2.49h-2.49zM89.64 104.58h4.98v2.49h-4.98zM102.09 104.58h2.49v2.49h-2.49zM107.07 104.58h9.96v2.49h-9.96zM119.52 104.58h4.98v2.49h-4.98zM126.99 104.58h2.49v2.49h-2.49zM144.42 104.58h2.49v2.49h-2.49zM149.40 104.58h2.49v2.49h-2.49zM7.47 107.07h4.98v2.49h-4.98zM19.92 107.07h2.49v2.49h-2.49zM24.90 107.07h2.49v2.49h-2.49zM32.37 107.07h2.49v2.49h-2.49zM39.84 107.07h7.47v2.49h-7.47zM52.29 107.07h7.47v2.49h-7.47zM62.25 107.07h2.49v2.49h-2.49zM67.23 107.07h2.49v2.49h-2.49zM72.21 107.07h4.98v2.49h-4.98zM89.64 107.07h7.47v2.49h-7.47zM104.58 107.07h4.98v2.49h-4.98zM114.54 107.07h7.47v2.49h-7.47zM124.50 107.07h2.49v2.49h-2.49zM131.97 107.07h7.47v2.49h-7.47zM144.42 107.07h7.47v2.49h-7.47zM0.00 109.56h2.49v2.49h-2.49zM4.98 109.56h7.47v2.49h-7.47zM14.94 109.56h7.47v2.49h-7.47zM24.90 109.56h4.98v2.49h-4.98zM32.37 109.56h4.98v2.49h-4.98zM39.84 109.56h2.49v2.49h-2.49zM52.29 109.56h2.49v2.49h-2.49zM69.72 109.56h4.98v2.49h-4.98zM84.66 109.56h2.49v2.49h-2.49zM97.11 109.56h2.49v2.49h-2.49zM102.09 109.56h9.96v2.49h-9.96zM114.54 109.56h17.43v2.49h-17.43zM134.46 109.56h4.98v2.49h-4.98zM141.93 109.56h9.96v2.49h-9.96zM0.00 112.05h2.49v2.49h-2.49zM9.96 112.05h2.49v2.49h-2.49zM17.43 112.05h4.98v2.49h-4.98zM27.39 112.05h2.49v2.49h-2.49zM32.37 112.05h2.49v2.49h-2.49zM37.35 112.05h4.98v2.49h-4.98zM44.82 112.05h12.45v2.49h-12.45zM59.76 112.05h7.47v2.49h-7.47zM74.70 112.05h2.49v2.49h-2.49zM84.66 112.05h2.49v2.49h-2.49zM92.13 112.05h7.47v2.49h-7.47zM109.56 112.05h4.98v2.49h-4.98zM119.52 112.05h2.49v2.49h-2.49zM124.50 112.05h9.96v2.49h-9.96zM136.95 112.05h4.98v2.49h-4.98zM144.42 112.05h7.47v2.49h-7.47zM7.47 114.54h2.49v2.49h-2.49zM14.94 114.54h9.96v2.49h-9.96zM27.39 114.54h2.49v2.49h-2.49zM32.37 114.54h2.49v2.49h-2.49zM47.31 114.54h2.49v2.49h-2.49zM52.29 114.54h2.49v2.49h-2.49zM62.25 114.54h2.49v2.49h-2.49zM69.72 114.54h4.98v2.49h-4.98zM79.68 114.54h7.47v2.49h-7.47zM92.13 114.54h2.49v2.49h-2.49zM97.11 114.54h2.49v2.49h-2.49zM102.09 114.54h9.96v2.49h-9.96zM117.03 114.54h2.49v2.49h-2.49zM122.01 114.54h7.47v2.49h-7.47zM134.46 114.54h4.98v2.49h-4.98zM141.93 114.54h2.49v2.49h-2.49zM146.91 114.54h2.49v2.49h-2.49zM0.00 117.03h2.49v2.49h-2.49zM4.98 117.03h4.98v2.49h-4.98zM12.45 117.03h2.49v2.49h-2.49zM17.43 117.03h2.49v2.49h-2.49zM22.41 117.03h2.49v2.49h-2.49zM27.39 117.03h2.49v2.49h-2.49zM32.37 117.03h2.49v2.49h-2.49zM42.33 117.03h14.94v2.49h-14.94zM62.25 117.03h2.49v2.49h-2.49zM67.23 117.03h2.49v2.49h-2.49zM72.21 117.03h2.49v2.49h-2.49zM79.68 117.03h2.49v2.49h-2.49zM87.15 117.03h7.47v2.49h-7.47zM97.11 117.03h2.49v2.49h-2.49zM104.58 117.03h2.49v2.49h-2.49zM112.05 117.03h2.49v2.49h-2.49zM117.03 117.03h2.49v2.49h-2.49zM124.50 117.03h2.49v2.49h-2.49zM131.97 117.03h7.47v2.49h-7.47zM141.93 117.03h2.49v2.49h-2.49zM146.91 117.03h2.49v2.49h-2.49zM0.00 119.52h4.98v2.49h-4.98zM7.47 119.52h4.98v2.49h-4.98zM22.41 119.52h4.98v2.49h-4.98zM32.37 119.52h2.49v2.49h-2.49zM37.35 119.52h9.96v2.49h-9.96zM49.80 119.52h2.49v2.49h-2.49zM54.78 119.52h12.45v2.49h-12.45zM69.72 119.52h2.49v2.49h-2.49zM77.19 119.52h7.47v2.49h-7.47zM87.15 119.52h4.98v2.49h-4.98zM99.60 119.52h12.45v2.49h-12.45zM114.54 119.52h2.49v2.49h-2.49zM119.52 119.52h4.98v2.49h-4.98zM144.42 119.52h7.47v2.49h-7.47zM2.49 122.01h9.96v2.49h-9.96zM14.94 122.01h2.49v2.49h-2.49zM22.41 122.01h2.49v2.49h-2.49zM27.39 122.01h9.96v2.49h-9.96zM44.82 122.01h2.49v2.49h-2.49zM49.80 122.01h2.49v2.49h-2.49zM57.27 122.01h2.49v2.49h-2.49zM62.25 122.01h2.49v2.49h-2.49zM77.19 122.01h2.49v2.49h-2.49zM84.66 122.01h2.49v2.49h-2.49zM89.64 122.01h2.49v2.49h-2.49zM99.60 122.01h2.49v2.49h-2.49zM107.07 122.01h2.49v2.49h-2.49zM112.05 122.01h2.49v2.49h-2.49zM117.03 122.01h2.49v2.49h-2.49zM124.50 122.01h7.47v2.49h-7.47zM144.42 122.01h4.98v2.49h-4.98zM0.00 124.50h2.49v2.49h-2.49zM12.45 124.50h4.98v2.49h-4.98zM22.41 124.50h12.45v2.49h-12.45zM39.84 124.50h7.47v2.49h-7.47zM52.29 124.50h4.98v2.49h-4.98zM62.25 124.50h2.49v2.49h-2.49zM67.23 124.50h2.49v2.49h-2.49zM72.21 124.50h14.94v2.49h-14.94zM89.64 124.50h4.98v2.49h-4.98zM97.11 124.50h7.47v2.49h-7.47zM107.07 124.50h2.49v2.49h-2.49zM114.54 124.50h4.98v2.49h-4.98zM124.50 124.50h9.96v2.49h-9.96zM136.95 124.50h4.98v2.49h-4.98zM146.91 124.50h4.98v2.49h-4.98zM4.98 126.99h2.49v2.49h-2.49zM12.45 126.99h2.49v2.49h-2.49zM17.43 126.99h4.98v2.49h-4.98zM24.90 126.99h2.49v2.49h-2.49zM29.88 126.99h2.49v2.49h-2.49zM37.35 126.99h2.49v2.49h-2.49zM42.33 126.99h4.98v2.49h-4.98zM49.80 126.99h4.98v2.49h-4.98zM57.27 126.99h4.98v2.49h-4.98zM72.21 126.99h4.98v2.49h-4.98zM87.15 126.99h7.47v2.49h-7.47zM97.11 126.99h4.98v2.49h-4.98zM107.07 126.99h2.49v2.49h-2.49zM114.54 126.99h4.98v2.49h-4.98zM122.01 126.99h2.49v2.49h-2.49zM134.46 126.99h4.98v2.49h-4.98zM141.93 126.99h2.49v2.49h-2.49zM146.91 126.99h4.98v2.49h-4.98zM0.00 129.48h4.98v2.49h-4.98zM12.45 129.48h7.47v2.49h-7.47zM27.39 129.48h7.47v2.49h-7.47zM37.35 129.48h7.47v2.49h-7.47zM47.31 129.48h2.49v2.49h-2.49zM52.29 129.48h2.49v2.49h-2.49zM59.76 129.48h4.98v2.49h-4.98zM67.23 129.48h2.49v2.49h-2.49zM72.21 129.48h4.98v2.49h-4.98zM79.68 129.48h2.49v2.49h-2.49zM89.64 129.48h2.49v2.49h-2.49zM94.62 129.48h2.49v2.49h-2.49zM99.60 129.48h4.98v2.49h-4.98zM107.07 129.48h2.49v2.49h-2.49zM112.05 129.48h2.49v2.49h-2.49zM117.03 129.48h2.49v2.49h-2.49zM126.99 129.48h2.49v2.49h-2.49zM134.46 129.48h4.98v2.49h-4.98zM141.93 129.48h2.49v2.49h-2.49zM146.91 129.48h4.98v2.49h-4.98zM19.92 131.97h4.98v2.49h-4.98zM27.39 131.97h2.49v2.49h-2.49zM32.37 131.97h4.98v2.49h-4.98zM39.84 131.97h2.49v2.49h-2.49zM44.82 131.97h2.49v2.49h-2.49zM49.80 131.97h2.49v2.49h-2.49zM54.78 131.97h2.49v2.49h-2.49zM62.25 131.97h7.47v2.49h-7.47zM72.21 131.97h2.49v2.49h-2.49zM77.19 131.97h4.98v2.49h-4.98zM84.66 131.97h2.49v2.49h-2.49zM89.64 131.97h2.49v2.49h-2.49zM94.62 131.97h2.49v2.49h-2.49zM107.07 131.97h4.98v2.49h-4.98zM114.54 131.97h2.49v2.49h-2.49zM119.52 131.97h4.98v2.49h-4.98zM131.97 131.97h7.47v2.49h-7.47zM144.42 131.97h2.49v2.49h-2.49zM149.40 131.97h2.49v2.49h-2.49zM0.00 134.46h17.43v2.49h-17.43zM19.92 134.46h2.49v2.49h-2.49zM24.90 134.46h2.49v2.49h-2.49zM29.88 134.46h4.98v2.49h-4.98zM37.35 134.46h2.49v2.49h-2.49zM47.31 134.46h4.98v2.49h-4.98zM54.78 134.46h2.49v2.49h-2.49zM59.76 134.46h2.49v2.49h-2.49zM64.74 134.46h4.98v2.49h-4.98zM72.21 134.46h4.98v2.49h-4.98zM79.68 134.46h2.49v2.49h-2.49zM87.15 134.46h7.47v2.49h-7.47zM97.11 134.46h4.98v2.49h-4.98zM104.58 134.46h7.47v2.49h-7.47zM117.03 134.46h14.94v2.49h-14.94zM139.44 134.46h2.49v2.49h-2.49zM144.42 134.46h2.49v2.49h-2.49zM0.00 136.95h2.49v2.49h-2.49zM14.94 136.95h2.49v2.49h-2.49zM19.92 136.95h2.49v2.49h-2.49zM24.90 136.95h2.49v2.49h-2.49zM29.88 136.95h2.49v2.49h-2.49zM39.84 136.95h4.98v2.49h-4.98zM49.80 136.95h2.49v2.49h-2.49zM59.76 136.95h2.49v2.49h-2.49zM64.74 136.95h2.49v2.49h-2.49zM69.72 136.95h2.49v2.49h-2.49zM74.70 136.95h9.96v2.49h-9.96zM89.64 136.95h14.94v2.49h-14.94zM112.05 136.95h4.98v2.49h-4.98zM126.99 136.95h2.49v2.49h-2.49zM136.95 136.95h2.49v2.49h-2.49zM141.93 136.95h4.98v2.49h-4.98zM0.00 139.44h2.49v2.49h-2.49zM4.98 139.44h7.47v2.49h-7.47zM14.94 139.44h2.49v2.49h-2.49zM22.41 139.44h2.49v2.49h-2.49zM32.37 139.44h2.49v2.49h-2.49zM42.33 139.44h2.49v2.49h-2.49zM49.80 139.44h2.49v2.49h-2.49zM54.78 139.44h12.45v2.49h-12.45zM74.70 139.44h2.49v2.49h-2.49zM89.64 139.44h4.98v2.49h-4.98zM99.60 139.44h2.49v2.49h-2.49zM109.56 139.44h9.96v2.49h-9.96zM122.01 139.44h2.49v2.49h-2.49zM126.99 139.44h9.96v2.49h-9.96zM141.93 139.44h7.47v2.49h-7.47zM0.00 141.93h2.49v2.49h-2.49zM4.98 141.93h7.47v2.49h-7.47zM14.94 141.93h2.49v2.49h-2.49zM19.92 141.93h2.49v2.49h-2.49zM24.90 141.93h4.98v2.49h-4.98zM37.35 141.93h4.98v2.49h-4.98zM49.80 141.93h2.49v2.49h-2.49zM54.78 141.93h2.49v2.49h-2.49zM59.76 141.93h4.98v2.49h-4.98zM67.23 141.93h2.49v2.49h-2.49zM72.21 141.93h7.47v2.49h-7.47zM87.15 141.93h2.49v2.49h-2.49zM97.11 141.93h2.49v2.49h-2.49zM102.09 141.93h2.49v2.49h-2.49zM107.07 141.93h2.49v2.49h-2.49zM114.54 141.93h2.49v2.49h-2.49zM124.50 141.93h4.98v2.49h-4.98zM131.97 141.93h2.49v2.49h-2.49zM141.93 141.93h2.49v2.49h-2.49zM0.00 144.42h2.49v2.49h-2.49zM4.98 144.42h7.47v2.49h-7.47zM14.94 144.42h2.49v2.49h-2.49zM22.41 144.42h4.98v2.49h-4.98zM32.37 144.42h2.49v2.49h-2.49zM37.35 144.42h2.49v2.49h-2.49zM42.33 144.42h2.49v2.49h-2.49zM54.78 144.42h2.49v2.49h-2.49zM64.74 144.42h4.98v2.49h-4.98zM77.19 144.42h4.98v2.49h-4.98zM87.15 144.42h2.49v2.49h-2.49zM92.13 144.42h12.45v2.49h-12.45zM109.56 144.42h4.98v2.49h-4.98zM117.03 144.42h17.43v2.49h-17.43zM136.95 144.42h4.98v2.49h-4.98zM144.42 144.42h2.49v2.49h-2.49zM0.00 146.91h2.49v2.49h-2.49zM14.94 146.91h2.49v2.49h-2.49zM19.92 146.91h4.98v2.49h-4.98zM29.88 146.91h2.49v2.49h-2.49zM34.86 146.91h2.49v2.49h-2.49zM39.84 146.91h2.49v2.49h-2.49zM47.31 146.91h2.49v2.49h-2.49zM52.29 146.91h7.47v2.49h-7.47zM67.23 146.91h2.49v2.49h-2.49zM72.21 146.91h4.98v2.49h-4.98zM89.64 146.91h2.49v2.49h-2.49zM97.11 146.91h4.98v2.49h-4.98zM104.58 146.91h4.98v2.49h-4.98zM122.01 146.91h9.96v2.49h-9.96zM141.93 146.91h2.49v2.49h-2.49zM146.91 146.91h2.49v2.49h-2.49zM0.00 149.40h17.43v2.49h-17.43zM29.88 149.40h2.49v2.49h-2.49zM39.84 149.40h4.98v2.49h-4.98zM49.80 149.40h9.96v2.49h-9.96zM67.23 149.40h2.49v2.49h-2.49zM72.21 149.40h2.49v2.49h-2.49zM77.19 149.40h4.98v2.49h-4.98zM84.66 149.40h9.96v2.49h-9.96zM99.60 149.40h2.49v2.49h-2.49zM104.58 149.40h4.98v2.49h-4.98zM112.05 149.40h4.98v2.49h-4.98zM119.52 149.40h2.49v2.49h-2.49zM124.50 149.40h2.49v2.49h-2.49zM134.46 149.40h2.49v2.49h-2.49zM139.44 149.40h2.49v2.49h-2.49zM144.42 149.40h4.98v2.49h-4.98z"/><rect x="20.3" y="20" width="116.6" height="116.7" fill="#757575"/><g shape-rendering="crispEdges"><rect x="20.3" y="20.0" width="27.5" height="30.1" fill="#858585"/><rect x="47.8" y="20.0" width="31.2" height="30.1" fill="#7b7b7b"/><rect x="79.0" y="20.0" width="38.7" height="18.9" fill="#6a6a6a"/><rect x="117.7" y="20.0" width="19.2" height="18.9" fill="#8e8e8e"/><rect x="79.0" y="38.9" width="19.2" height="39.1" fill="#686868"/><rect x="98.2" y="38.9" width="19.6" height="20.3" fill="#7e7e7e"/><rect x="117.7" y="38.9" width="19.2" height="39.1" fill="#818181"/><rect x="20.3" y="50.1" width="27.5" height="28.0" fill="#6e6e6e"/><rect x="47.8" y="50.1" width="31.2" height="28.0" fill="#646464"/><rect x="98.2" y="59.1" width="19.6" height="18.9" fill="#707070"/><rect x="20.3" y="78.0" width="33.1" height="21.0" fill="#777777"/><rect x="53.4" y="78.0" width="25.6" height="19.6" fill="#808080"/><rect x="79.0" y="78.0" width="20.5" height="58.7" fill="#747474"/><rect x="99.6" y="78.0" width="18.2" height="31.5" fill="#838383"/><rect x="117.7" y="78.0" width="19.2" height="58.7" fill="#777777"/><rect x="20.3" y="99.0" width="33.1" height="18.2" fill="#858886"/><rect x="53.4" y="97.6" width="25.6" height="39.1" fill="#737373"/><rect x="20.3" y="117.1" width="33.1" height="19.6" fill="#737373"/><rect x="99.6" y="109.5" width="18.2" height="27.3" fill="#757575"/></g></svg>
<div class="abs" style="left:1156px;top:554px;font-size:12px;letter-spacing:0.33px;color:#9a9a9a;line-height:14px">Scan for a Quick Import</div>
</body></html>
